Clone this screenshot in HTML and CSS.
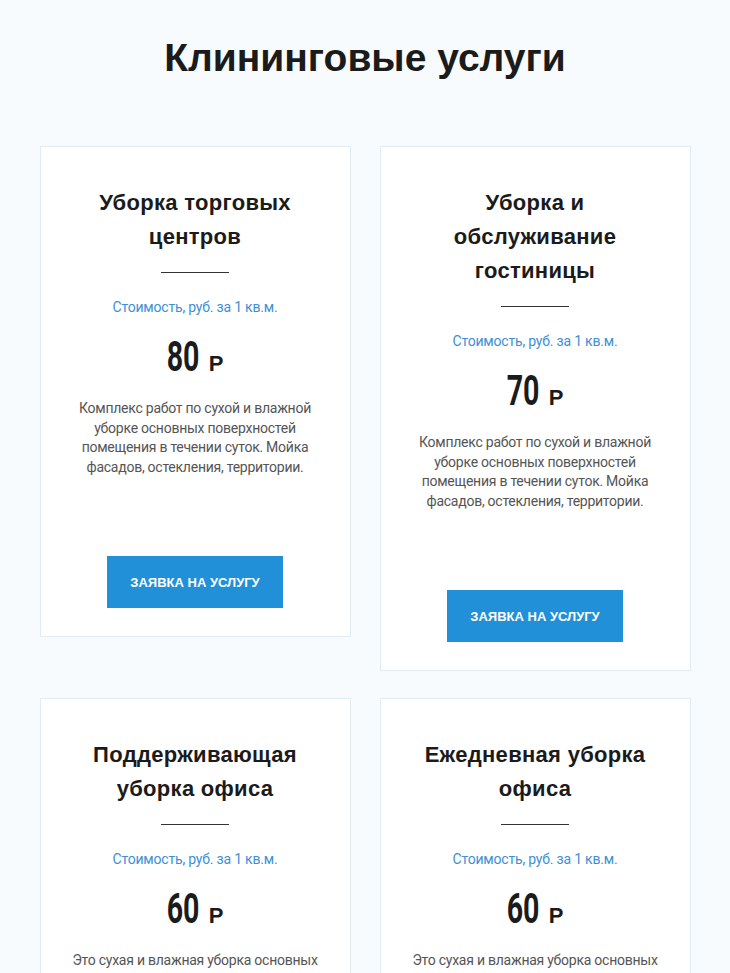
FILE: index.html
```html
<!DOCTYPE html>
<html lang="ru">
<head>
<meta charset="utf-8">
<title>Клининговые услуги</title>
<link rel="stylesheet" href="styles.css">
</head>
<body>
<section class="services">
  <h1 class="services-title">Клининговые услуги</h1>
  <div class="grid">
    <div class="card">
      <h2 class="card-title">Уборка торговых<br>центров</h2>
      <div class="divider"></div>
      <p class="cost">Стоимость, руб. за 1 кв.м.</p>
      <div class="price"><span class="num">80</span><span class="cur">Р</span></div>
      <p class="desc">Комплекс работ по сухой и влажной уборке основных поверхностей помещения в течении суток. Мойка фасадов, остекления, территории.</p>
      <a class="btn" href="#">Заявка на услугу</a>
    </div>
    <div class="card">
      <h2 class="card-title">Уборка и<br>обслуживание<br>гостиницы</h2>
      <div class="divider"></div>
      <p class="cost">Стоимость, руб. за 1 кв.м.</p>
      <div class="price"><span class="num">70</span><span class="cur">Р</span></div>
      <p class="desc">Комплекс работ по сухой и влажной уборке основных поверхностей помещения в течении суток. Мойка фасадов, остекления, территории.</p>
      <a class="btn" href="#">Заявка на услугу</a>
    </div>
    <div class="card">
      <h2 class="card-title">Поддерживающая<br>уборка офиса</h2>
      <div class="divider"></div>
      <p class="cost">Стоимость, руб. за 1 кв.м.</p>
      <div class="price"><span class="num">60</span><span class="cur">Р</span></div>
      <p class="desc">Это сухая и влажная уборка основных поверхностей помещения. Влажная уборка полов, удаление пыли.</p>
      <a class="btn" href="#">Заявка на услугу</a>
    </div>
    <div class="card">
      <h2 class="card-title">Ежедневная уборка<br>офиса</h2>
      <div class="divider"></div>
      <p class="cost">Стоимость, руб. за 1 кв.м.</p>
      <div class="price"><span class="num">60</span><span class="cur">Р</span></div>
      <p class="desc">Это сухая и влажная уборка основных поверхностей помещения. Влажная уборка полов, удаление пыли.</p>
      <a class="btn" href="#">Заявка на услугу</a>
    </div>
  </div>
</section>
</body>
</html>
```
FILE: styles.css
```css
html, body {
  margin: 0;
  padding: 0;
  background: #f7fbfe;
  font-family: "Liberation Sans", Arial, sans-serif;
}
.services {
  padding-top: 34px;
}
.services-title {
  margin: 0;
  text-align: center;
  font-size: 39px;
  line-height: 48px;
  font-weight: 700;
  color: #1b1b1b;
}
.grid {
  display: grid;
  grid-template-columns: 311px 311px;
  column-gap: 29px;
  row-gap: 27px;
  justify-content: center;
  align-items: start;
  margin-top: 64px;
}
.card {
  background: #fff;
  border: 1px solid #e1ebf3;
  padding: 39px 30px 28px;
  display: flex;
  flex-direction: column;
  align-items: center;
  text-align: center;
}
.card-title {
  margin: 0;
  font-size: 22px;
  line-height: 34px;
  font-weight: 700;
  color: #1b1b1b;
  letter-spacing: 0.3px;
}
.divider {
  width: 68px;
  height: 1px;
  background: #333;
  margin-top: 18px;
}
.cost {
  margin: 24px 0 0;
  font-family: "Roboto", sans-serif;
  font-size: 14px;
  letter-spacing: -0.2px;
  line-height: 20px;
  color: #3d8fd6;
}
.price {
  margin-top: 16px;
  display: flex;
  align-items: baseline;
  gap: 10px;
  color: #1b1b1b;
  line-height: 48px;
}
.num {
  display: inline-block;
  font-family: "Roboto", sans-serif;
  font-weight: 700;
  font-size: 42px;
  transform: scaleX(0.68);
  margin: 0 -8px;
}
.cur {
  font-family: "Liberation Sans", Arial, sans-serif;
  font-weight: 700;
  font-size: 22px;
}
.desc {
  margin: 11px 0 0;
  font-family: "Roboto", sans-serif;
  font-size: 14px;
  letter-spacing: -0.25px;
  line-height: 19.5px;
  color: #555;
  max-width: 255px;
}
.btn {
  display: flex;
  align-items: center;
  justify-content: center;
  width: 176px;
  height: 52px;
  margin-top: 79px;
  background: #2290d8;
  color: #fff;
  text-decoration: none;
  text-transform: uppercase;
  font-weight: 700;
  font-size: 13px;
}
```
